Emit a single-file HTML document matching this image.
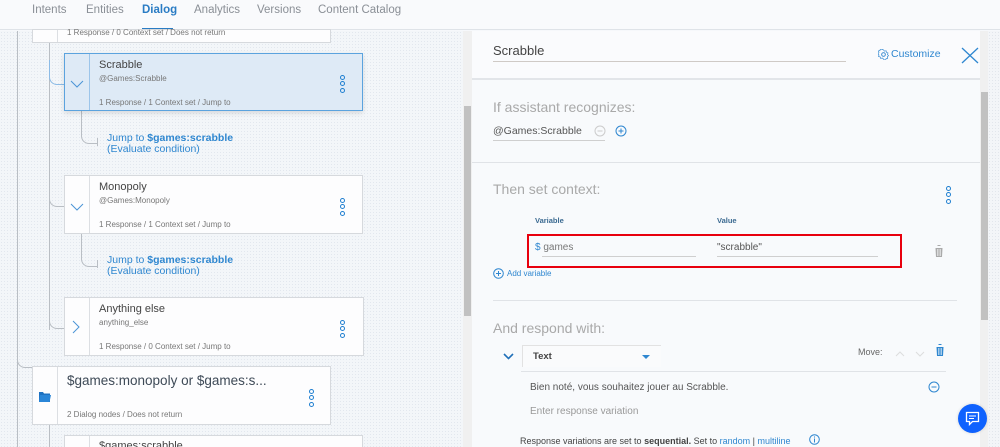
<!DOCTYPE html>
<html><head><meta charset="utf-8"><style>
*{margin:0;padding:0;box-sizing:border-box}
html,body{width:1000px;height:447px;overflow:hidden}
body{background:#f6f8fb;font-family:"Liberation Sans",sans-serif;position:relative;color:#333}
.a{position:absolute;white-space:nowrap}
.nav{left:0;top:0;width:1000px;height:30px;background:#f9fafc;border-bottom:1px solid #dfe3e8}
.tab{top:4px;font-size:11.5px;color:#8a8f96}
.canvas{left:0;top:31px;width:463px;height:416px;background-color:#f3f6f9;background-image:radial-gradient(#e2e7ee 0.6px,transparent 0.7px);background-size:3px 3px}
.card{position:absolute;background:#fdfdfe;border:1px solid #d6d9dd}
.card .div{position:absolute;left:24px;top:0;bottom:0;border-left:1px solid #dcdfe3}
.t{font-size:11px;color:#444}
.s{font-size:8px;color:#777}
.f{font-size:8px;color:#777}
.dots{position:absolute;width:6px}
.dots i{display:block;width:5px;height:5px;border:1.3px solid #1f7fd0;border-radius:50%;margin-bottom:1.3px}
.ln{position:absolute;border-color:#b9bec4;border-style:solid;border-width:0}
.jump{font-size:10.5px;color:#2f87d0;line-height:11px}
.sec{font-size:14px;color:#a9a9a9}
.hr{position:absolute;height:1px;background:#e0e3e7}
.blue{color:#2f87d0}
</style></head><body>
<div class="a nav"></div>
<div class="a tab" style="left:32px">Intents</div>
<div class="a tab" style="left:86px">Entities</div>
<div class="a tab" style="left:142px;color:#2a7cc4;font-weight:bold">Dialog</div>
<div class="a" style="left:142px;top:28px;width:31px;height:2px;background:#2a7cc4"></div>
<div class="a tab" style="left:194px">Analytics</div>
<div class="a tab" style="left:257px">Versions</div>
<div class="a tab" style="left:318px">Content Catalog</div>

<div class="a canvas"></div>
<div class="ln" style="left:17px;top:31px;height:416px;border-left-width:1px"></div>
<div class="ln" style="left:49px;top:42px;height:288px;border-left-width:1px"></div>
<div class="card" style="left:32px;top:29px;width:299px;height:14px"><div class="div"></div></div>
<div class="a f" style="left:67px;top:28px">1 Response / 0 Context set / Does not return</div>
<div class="ln" style="left:49px;top:60px;width:16px;height:25px;border-left-width:1px;border-bottom-width:1px;border-color:#8cbbe6;border-bottom-left-radius:8px"></div>
<div class="ln" style="left:49px;top:180px;width:16px;height:27px;border-left-width:1px;border-bottom-width:1px;border-bottom-left-radius:8px"></div>
<div class="ln" style="left:49px;top:300px;width:16px;height:29px;border-left-width:1px;border-bottom-width:1px;border-bottom-left-radius:8px"></div>
<div class="ln" style="left:17px;top:340px;width:16px;height:28px;border-left-width:1px;border-bottom-width:1px;border-bottom-left-radius:8px"></div>
<div class="ln" style="left:81px;top:110px;width:16px;height:34px;border-left-width:1px;border-bottom-width:1px;border-bottom-left-radius:8px"></div>
<div class="ln" style="left:97px;top:138px;height:8px;border-left-width:1px"></div>
<div class="ln" style="left:81px;top:233px;width:16px;height:34px;border-left-width:1px;border-bottom-width:1px;border-bottom-left-radius:8px"></div>
<div class="ln" style="left:97px;top:260px;height:8px;border-left-width:1px"></div>
<div class="ln" style="left:49px;top:424px;height:23px;border-left-width:1px"></div>

<div class="card" style="left:64px;top:53px;width:299px;height:58px;background:#deeaf6;border-color:#5ba3de;box-shadow:0 2px 5px rgba(0,0,0,.12)"><div class="div" style="border-color:#9cc5ea"></div></div>
<div class="a t" style="left:99px;top:59px">Scrabble</div>
<div class="a s" style="left:99px;top:74px">@Games:Scrabble</div>
<div class="a f" style="left:99px;top:98px">1 Response / 1 Context set / Jump to</div>
<svg class="a" style="left:70px;top:80px" width="14" height="8"><path d="M1 1 L7 7 L13 1" stroke="#4a94d6" fill="none"/></svg>
<div class="dots" style="left:340px;top:75px"><i></i><i></i><i></i></div>
<div class="a jump" style="left:107px;top:133px">Jump to <b>$games:scrabble</b><br>(Evaluate condition)</div>

<div class="card" style="left:64px;top:175px;width:299px;height:59px"><div class="div"></div></div>
<div class="a t" style="left:99px;top:181px">Monopoly</div>
<div class="a s" style="left:99px;top:196px">@Games:Monopoly</div>
<div class="a f" style="left:99px;top:220px">1 Response / 1 Context set / Jump to</div>
<svg class="a" style="left:70px;top:203px" width="14" height="8"><path d="M1 1 L7 7 L13 1" stroke="#4a94d6" fill="none"/></svg>
<div class="dots" style="left:340px;top:198px"><i></i><i></i><i></i></div>
<div class="a jump" style="left:107px;top:255px">Jump to <b>$games:scrabble</b><br>(Evaluate condition)</div>

<div class="card" style="left:64px;top:297px;width:300px;height:59px"><div class="div"></div></div>
<div class="a t" style="left:99px;top:303px">Anything else</div>
<div class="a s" style="left:99px;top:318px">anything_else</div>
<div class="a f" style="left:99px;top:342px">1 Response / 0 Context set / Jump to</div>
<svg class="a" style="left:72px;top:320px" width="8" height="14"><path d="M1 1 L7 7 L1 13" stroke="#4a94d6" fill="none"/></svg>
<div class="dots" style="left:340px;top:320px"><i></i><i></i><i></i></div>

<div class="card" style="left:32px;top:366px;width:299px;height:59px"><div class="div"></div></div>
<div class="a" style="left:67px;top:373px;font-size:13.5px;color:#3e4a57">$games:monopoly or $games:s...</div>
<div class="a f" style="left:67px;top:410px">2 Dialog nodes / Does not return</div>
<svg class="a" style="left:39px;top:391px" width="12" height="11"><path d="M0 1h4l1 1.5h6v8.5H0z" fill="#1e72c2"/><path d="M1 4h11l-1.5 7H0z" fill="#2a86d8"/></svg>
<div class="dots" style="left:309px;top:389px"><i></i><i></i><i></i></div>
<div class="card" style="left:64px;top:435px;width:299px;height:20px"><div class="div"></div></div>
<div class="a t" style="left:99px;top:440px">$games:scrabble</div>

<div class="a" style="left:463px;top:31px;width:9px;height:416px;background:#f0f0f0"></div>
<div class="a" style="left:464px;top:106px;width:7px;height:210px;background:#c1c1c1"></div>
<div class="a" style="left:472px;top:31px;width:8px;height:416px;background:#fafbfc"></div>

<div class="a" style="left:472px;top:31px;width:528px;height:416px;background:#f8fafc"></div>
<div class="a" style="left:472px;top:31px;width:508px;height:49px;background:#fafbfd;border-bottom:2px solid #e2e5e9"></div>
<div class="a" style="left:493px;top:43px;font-size:13px;color:#444">Scrabble</div>
<div class="a" style="left:493px;top:61px;width:353px;height:1px;background:#cfcac6"></div>
<svg class="a" style="left:878px;top:49px" width="11" height="11" viewBox="0 0 12 12"><circle cx="6" cy="6" r="2" fill="none" stroke="#2f87d0"/><path d="M6 .8l1.2 1.4 1.8-.4.4 1.8 1.8.6-.6 1.8 1.2 1.4-1.4 1.2.4 1.8-1.8.4-.6 1.8-1.8-.6L6 11.2 4.6 10l-1.8.6-.6-1.8-1.8-.4.4-1.8L-.4 5.2.8 3.8 .2 2l1.8-.6.4-1.8 1.8.4z" fill="none" stroke="#2f87d0" stroke-width=".8" transform="scale(.95) translate(.3 .3)"/></svg>
<div class="a" style="left:891px;top:48px;font-size:10.5px;color:#2f87d0">Customize</div>
<svg class="a" style="left:961px;top:47px" width="18" height="17"><path d="M1 1L17 16M17 1L1 16" stroke="#2f87d0" stroke-width="1.3"/></svg>
<div class="a" style="left:980px;top:31px;width:8px;height:416px;background:#f0f0f0"></div>
<div class="a" style="left:981px;top:92px;width:7px;height:228px;background:#c1c1c1"></div>
<div class="a" style="left:988px;top:31px;width:12px;height:416px;background-color:#f3f5f8;background-image:radial-gradient(#e2e6ec .6px,transparent .7px);background-size:3px 3px"></div>

<div class="a sec" style="left:493px;top:99px">If assistant recognizes:</div>
<div class="a" style="left:493px;top:125px;font-size:10.5px;color:#555">@Games:Scrabble</div>
<div class="a" style="left:493px;top:140px;width:112px;height:1px;background:#cfcfcf"></div>
<svg class="a" style="left:594px;top:125px" width="12" height="12"><circle cx="6" cy="6" r="5" fill="none" stroke="#ccc"/><path d="M3.5 6h5" stroke="#ccc"/></svg>
<svg class="a" style="left:615px;top:125px" width="12" height="12"><circle cx="6" cy="6" r="5" fill="none" stroke="#2f87d0"/><path d="M3.5 6h5M6 3.5v5" stroke="#2f87d0"/></svg>
<div class="hr" style="left:472px;top:162px;width:508px"></div>
<div class="a sec" style="left:493px;top:181px">Then set context:</div>
<div class="dots" style="left:946px;top:186px"><i></i><i></i><i></i></div>
<div class="a" style="left:535px;top:216px;font-size:7.5px;font-weight:bold;color:#3b6a91">Variable</div>
<div class="a" style="left:717px;top:216px;font-size:7.5px;font-weight:bold;color:#3b6a91">Value</div>
<div class="a" style="left:527px;top:234px;width:375px;height:34px;border:2px solid #e8000d"></div>
<div class="a" style="left:535px;top:242px;font-size:10px;color:#777"><span class="blue">$</span> games</div>
<div class="a" style="left:542px;top:256px;width:154px;height:1px;background:#cfcfcf"></div>
<div class="a" style="left:717px;top:242px;font-size:10px;color:#555">"scrabble"</div>
<div class="a" style="left:717px;top:256px;width:161px;height:1px;background:#cfcfcf"></div>
<svg class="a" style="left:934px;top:245px" width="10" height="12"><path d="M0 2h10M3.5 1V0h3v1M1.5 3h7l-.5 9h-6z" fill="#aaa"/><path d="M3.5 4v7M5 4v7M6.5 4v7" stroke="#f8fafc" stroke-width=".6"/></svg>
<svg class="a" style="left:493px;top:268px" width="11" height="11"><circle cx="5.5" cy="5.5" r="4.8" fill="none" stroke="#2f87d0"/><path d="M3 5.5h5M5.5 3v5" stroke="#2f87d0"/></svg>
<div class="a" style="left:507px;top:269px;font-size:8px;color:#2f87d0">Add variable</div>
<div class="hr" style="left:493px;top:300px;width:464px"></div>
<div class="a sec" style="left:493px;top:320px">And respond with:</div>
<svg class="a" style="left:503px;top:353px" width="11" height="7"><path d="M1 1l4.5 4.5L10 1" stroke="#1f6fb8" stroke-width="1.6" fill="none"/></svg>
<div class="a" style="left:522px;top:345px;width:139px;height:22px;border-left:1px solid #e2e2e2;border-top:1px solid #e2e2e2;background:#fafbfc"></div>
<div class="a" style="left:533px;top:351px;font-size:9.5px;font-weight:bold;color:#444">Text</div>
<div class="a" style="left:642px;top:355px;width:0;height:0;border-left:4px solid transparent;border-right:4px solid transparent;border-top:4px solid #2f87d0"></div>
<div class="a" style="left:858px;top:347px;font-size:9px;color:#666">Move:</div>
<svg class="a" style="left:895px;top:349px" width="40" height="8"><path d="M1 7l4-4 4 4M21 3l4 4 4-4" stroke="#ddd" fill="none"/></svg>
<svg class="a" style="left:935px;top:344px" width="10" height="12"><path d="M0 2h10M3.5 1V0h3v1M1.5 3h7l-.5 9h-6z" fill="#2f87d0"/><path d="M3.5 4v7M5 4v7M6.5 4v7" stroke="#f8fafc" stroke-width=".6"/></svg>
<div class="hr" style="left:521px;top:371px;width:425px"></div>
<div class="a" style="left:530px;top:382px;font-size:10px;color:#555">Bien noté, vous souhaitez jouer au Scrabble.</div>
<svg class="a" style="left:928px;top:381px" width="12" height="12"><circle cx="6" cy="6" r="5" fill="none" stroke="#2f87d0"/><path d="M3.5 6h5" stroke="#2f87d0"/></svg>
<div class="a" style="left:530px;top:406px;font-size:10px;color:#999">Enter response variation</div>
<div class="a" style="left:520px;top:436px;font-size:9px;color:#444">Response variations are set to <b>sequential.</b> Set to <span class="blue">random</span> | <span class="blue">multiline</span></div>
<svg class="a" style="left:809px;top:434px" width="11" height="11"><circle cx="5.5" cy="5.5" r="4.8" fill="none" stroke="#2f87d0"/><path d="M5.5 4.5v4" stroke="#2f87d0"/><circle cx="5.5" cy="3" r=".6" fill="#2f87d0"/></svg>
<div class="a" style="left:958px;top:404px;width:29px;height:29px;border-radius:50%;background:#0f62fe;box-shadow:0 0 3px rgba(0,0,0,.15)"></div>
<svg class="a" style="left:965px;top:411px" width="15" height="15"><path d="M1.5 1.5h12v9h-6l-3 3v-3h-3z" fill="none" stroke="#fff" stroke-width="1.3"/><path d="M4 5h7M4 7.5h5" stroke="#fff" stroke-width="1.1"/></svg>
</body></html>
